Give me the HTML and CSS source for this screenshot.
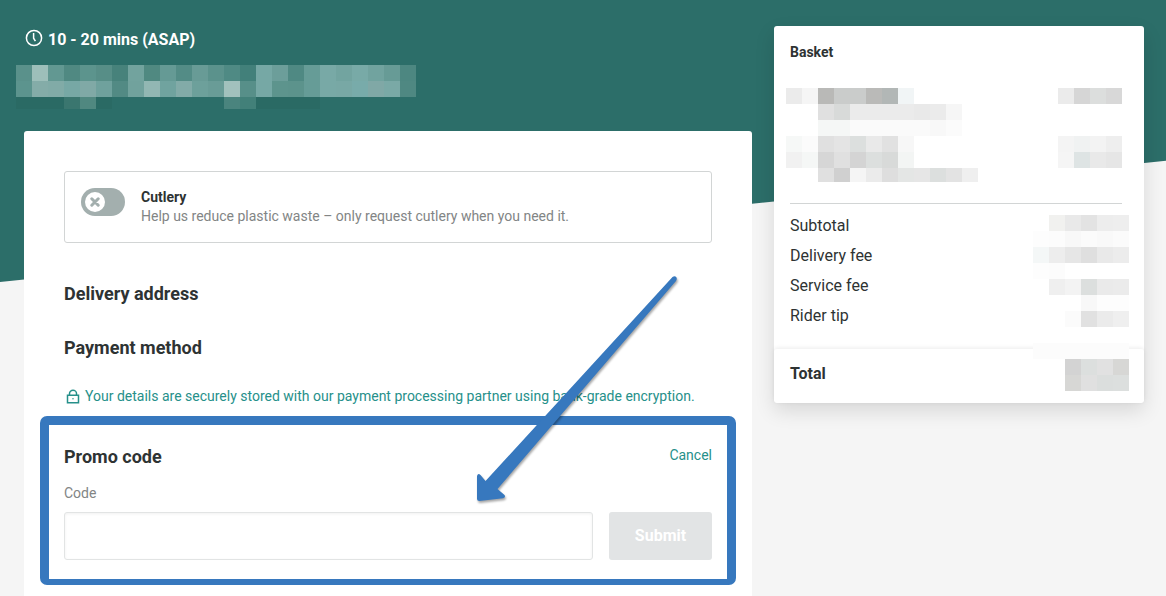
FILE: index.html
```
<!DOCTYPE html>
<html lang="en">
<head>
  <meta charset="UTF-8">
  <meta name="viewport" content="width=device-width, initial-scale=1.0">
  <title>Checkout</title>
  <link rel="stylesheet" href="styles.css">
</head>
<body>
  <div class="page">
    <div class="backdrop"></div>
    <div class="layout">
      <main class="checkout">
        <header class="delivery">
          <p class="delivery-time">
            <svg class="clock" width="18" height="18" viewBox="0 0 18 18" fill="none" stroke="currentColor" stroke-width="1.5" aria-hidden="true">
              <circle cx="9" cy="9" r="7.6"/>
              <path d="M8.6 4v5.2l1.8 3"/>
            </svg>
            10 - 20 mins (ASAP)
          </p>
          <svg class="mosaic mosaic-address" data-mosaic="address" width="400" height="44" aria-hidden="true"></svg>
        </header>

        <div class="panel">
          <div class="cutlery">
            <input type="checkbox" class="toggle-input" id="cutlery">
            <label class="toggle" for="cutlery" aria-label="Cutlery">
              <span class="knob">
                <svg width="10" height="10" viewBox="0 0 10 10" stroke="#a3afae" stroke-width="3" stroke-linecap="round" aria-hidden="true">
                  <path d="M1.8 1.8l6.4 6.4M8.2 1.8L1.8 8.2"/>
                </svg>
              </span>
            </label>
            <div>
              <h3>Cutlery</h3>
              <p>Help us reduce plastic waste – only request cutlery when you need it.</p>
            </div>
          </div>

          <h2>Delivery address</h2>
          <h2>Payment method</h2>
          <p class="secure">
            <svg width="14" height="15" viewBox="0 0 14 15" fill="none" stroke="currentColor" stroke-width="1.5" aria-hidden="true">
              <path d="M1.5 6.2h11v7.6h-11z"/>
              <path d="M3.500 6V4.500a3.500 3.200 0 0 1 7 0V6"/>
              <path d="M6.200 9.800h1.600" stroke-width="1"/>
            </svg>
            Your details are securely stored with our payment processing partner using bank-grade encryption.
          </p>

          <form class="promo">
            <div class="promo-head">
              <h2>Promo code</h2>
              <a href="#">Cancel</a>
            </div>
            <label for="code">Code</label>
            <div class="promo-row">
              <input type="text" id="code">
              <button type="submit" disabled>Submit</button>
            </div>
            <svg class="arrow" width="210" height="234" viewBox="0 0 210 234" aria-hidden="true">
              <path d="M202.500 3Q204.500 1.500 206 2.800Q207.600 4.500 206 7L27.500 215L34.500 221Q36 223.500 33 224.300L9.500 227Q7 227 7 224.500V202Q8 198.500 10.500 201L15.500 207Z"/>
            </svg>
          </form>
        </div>
      </main>

      <aside class="basket">
        <div class="basket-items">
          <h3>Basket</h3>
          <svg class="mosaic mosaic-items" data-mosaic="items" width="336" height="94" aria-hidden="true"></svg>
        </div>
        <div class="fees">
          <ul>
            <li>Subtotal</li>
            <li>Delivery fee</li>
            <li>Service fee</li>
            <li>Rider tip</li>
          </ul>
          <svg class="mosaic" data-mosaic="fees" width="96" height="112" aria-hidden="true"></svg>
        </div>
        <div class="total">
          <strong>Total</strong>
          <svg class="mosaic mosaic-total" data-mosaic="total" width="96" height="48" aria-hidden="true"></svg>
        </div>
      </aside>
    </div>
  </div>

  <script>
    // One string per row, one colour per 16px cell, "-" leaves the cell empty
    const mosaics = {
      address: [
        '5a918b 9dbfba 629892 508982 5c948d 578e87 47827b 72a39e 508981 659a95 538c86 689b96 5b928c 4f8a84 42807a 76a8a5 6c9e9a 4f8983 669c97 78a9a6 72a4a0 78aaa7 71a39f 679b96 4d8781',
        '5c948e 84aca8 81aba7 77a8a5 80a9a6 6fa19d 528a84 71a29d 92b7b3 70a39f 82aba8 6da09b 699c97 a2c1bd 578f89 76a8a5 5d948d 5c938c 669c97 78a9a6 78a8a5 78abaa 80a8a6 7aa9a6 4f8882',
        '2a6a64 2a6a64 2a6a64 3a766f 508880 2a6a64 - - - - - - - 4a847e 428079 2a6a64 2a6a64 2a6a64 2a6a64'
      ],
      items: [
        'ebebeb f5f5f5 b9b9b7 cacccb cacccb babab8 b2b7b6 f1f5f6 - - - - - - - - - ebebeb d6d6d6 dcdedd d8d8d8',
        '- - e0e0e0 d8dad9 ebebeb ebebeb ebebeb ebebeb e9e9e9 ebebeb f6f6f6',
        '- - f5f7f6 f5f7f6 fafafa fafafa fafafa fafafa fafafa f8f8f8 fbfbfb',
        'f6f8f7 fbfbfb e0e0e0 e4e4e4 dcdfde e9e9e9 e1e1e1 f7f7f7 - - - - - - - - - f4f4f4 f0f2f2 f3f3f3 eeeeee',
        'f1f1f1 f5f7f6 d6d6d6 e0e0e0 d4d4d4 dcdfde d8dad9 f3f5f4 - - - - - - - - - f5f5f5 dee4e4 e9e9e9 e6e6e6',
        '- - e0e0e0 d0d0d0 f5f5f5 ebebeb dedede e4e6e5 e6e6e6 dcdfde e3e3e3 efefef'
      ],
      fees: [
        '- f1f1ef e9e9e9 e3e3e3 ededed eeeeee',
        'fdfdfd fcfcfc f8f8f8 fbfbfb f9f9f9 fbfbfb',
        'f4f7f7 ededed e6e6e6 dfdfdf e9e9e9 ececec',
        'fdfdfd fcfcfc - - - -',
        '- efefef f3f3f3 dcdfde eaeaea ebebeb',
        '- - - f8f8f8 fdfdfd fdfdfd',
        '- - fbfbfb e1e1e1 ebebeb efefef'
      ],
      total: [
        'fcfcfc fcfcfc fcfcfc fcfcfc fcfcfc fcfcfc',
        '- - d3d3d3 dcdfde e1e1e1 d7d7d5',
        '- - d7d7d5 e0e0e0 dbdedd dcdfde'
      ]
    };

    document.querySelectorAll('[data-mosaic]').forEach(svg => {
      mosaics[svg.dataset.mosaic].forEach((row, y) => {
        row.split(' ').forEach((color, x) => {
          if (color === '-') return;
          const cell = document.createElementNS('http://www.w3.org/2000/svg', 'rect');
          cell.setAttribute('x', x * 16);
          cell.setAttribute('y', y * 16);
          cell.setAttribute('width', 16);
          cell.setAttribute('height', 16);
          cell.setAttribute('fill', '#' + color);
          svg.appendChild(cell);
        });
      });
    });
  </script>
</body>
</html>
```
FILE: styles.css
```
* {
  box-sizing: border-box;
}
body {
  margin: 0;
  font-family: Roboto, 'Noto Sans', sans-serif;
  font-size: 14px;
  line-height: 20px;
  color: #2e3333;
  background: #f5f5f5;
}
h2, h3, p, ul {
  margin: 0;
  padding: 0;
}
h2 {
  font-size: 18px;
  line-height: 24px;
}
h3 {
  font-size: 14px;
  line-height: 20px;
}
a {
  color: #26908a;
  text-decoration: none;
}
.page {
  display: grid;
  height: 100vh;
  overflow: hidden;
}
.backdrop {
  grid-area: 1 / 1;
  height: 282px;
  background: #2c6e69;
  clip-path: polygon(0 0, 100% 0, 100% 57%, 0 100%);
}
.layout {
  grid-area: 1 / 1;
  display: grid;
  grid-template-columns: minmax(0, 1fr) 370px;
  gap: 22px;
  align-items: start;
  padding: 26px 22px 0 24px;
  z-index: 1;
}
.mosaic {
  display: block;
  flex: none;
}

/* Left column */
.checkout {
  display: flex;
  flex-direction: column;
  min-height: calc(100vh - 26px);
}
.delivery-time {
  display: flex;
  align-items: center;
  gap: 5px;
  padding: 4px 0 0 1px;
  font-size: 16px;
  font-weight: 700;
  color: #fff;
}
.clock {
  margin-top: -4px;
}
.mosaic-address {
  margin: 15px 0 22px -8px;
}
.panel {
  flex: 1;
  padding: 40px;
  background: #fff;
  border-radius: 3px 3px 0 0;
}
.cutlery {
  display: flex;
  gap: 16px;
  height: 72px;
  margin-bottom: 39px;
  padding: 15px 16px;
  border: 1px solid #d2d5d5;
  border-radius: 3px;
}
.cutlery p {
  line-height: 18px;
  color: #828585;
}
.toggle-input {
  position: absolute;
  opacity: 0;
}
.toggle {
  display: flex;
  flex: none;
  width: 44px;
  height: 28px;
  margin-top: 1px;
  padding: 4px;
  background: #a3afae;
  border-radius: 14px;
  cursor: pointer;
}
.knob {
  display: flex;
  align-items: center;
  justify-content: center;
  width: 20px;
  height: 20px;
  background: #fff;
  border-radius: 50%;
}
.toggle-input:checked + .toggle {
  justify-content: flex-end;
  background: #00ccbc;
}
.panel > h2 {
  margin-bottom: 30px;
}
.secure {
  display: flex;
  align-items: center;
  gap: 5px;
  margin: -4px 0 10px 2px;
  white-space: nowrap;
  color: #26908a;
}
.promo {
  position: relative;
  margin: 0 -24px;
  padding: 20px 15px 19px;
  border: 9px solid #3778be;
  border-bottom-width: 6px;
  border-radius: 7px;
}
.promo-head {
  display: flex;
  justify-content: space-between;
}
.promo label {
  display: block;
  margin: 14px 0 9px;
  color: #828585;
}
.promo-row {
  display: flex;
  gap: 16px;
}
.promo input {
  flex: 1;
  height: 48px;
  padding: 0 16px;
  font: inherit;
  border: 1px solid #e2e4e4;
  border-radius: 3px;
  box-shadow: inset 0 1px 3px rgba(0, 0, 0, 0.06);
}
.promo button {
  width: 103px;
  font: inherit;
  font-size: 16px;
  font-weight: 700;
  color: #fff;
  background: #e2e4e5;
  border: none;
  border-radius: 3px;
}
.arrow {
  position: absolute;
  right: 47px;
  bottom: 71px;
  fill: #3778be;
  filter: drop-shadow(1px 2px 1px rgba(0, 0, 0, 0.35));
  pointer-events: none;
}

/* Basket */
.basket {
  background: #fff;
  border-radius: 3px;
  box-shadow: 0 8px 20px rgba(0, 0, 0, 0.12);
}
.basket-items {
  margin: 0 22px 0 16px;
  padding: 16px 0 21px;
  border-bottom: 1px solid #d2d5d5;
}
.mosaic-items {
  margin: 26px 0 0 -4px;
}
.fees {
  display: flex;
  justify-content: space-between;
  align-items: flex-start;
  padding: 11px 15px 18px 16px;
}
.fees ul {
  list-style: none;
  font-size: 16px;
  line-height: 30px;
  margin-top: -4px;
}
.total {
  display: flex;
  justify-content: space-between;
  align-items: flex-start;
  height: 54px;
  padding: 0 15px 0 16px;
  border-radius: 3px;
  box-shadow: 0 -1px 4px rgba(0, 0, 0, 0.08);
}
.total strong {
  font-size: 16px;
  line-height: 50px;
}
.mosaic-total {
  margin-top: -6px;
}
```
